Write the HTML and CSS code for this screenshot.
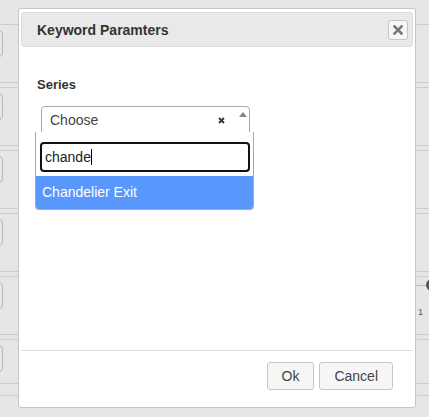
FILE: index.html
```html
<!DOCTYPE html>
<html>
<head>
<meta charset="utf-8">
<title>Keyword Paramters</title>
<link rel="stylesheet" href="styles.css">
</head>
<body>
<div class="page">
  <div class="row"><span class="stub"></span></div>
  <div class="row"><span class="stub"></span></div>
  <div class="row"><span class="stub"></span></div>
  <div class="row"><span class="stub"></span></div>
  <div class="row">
    <span class="stub"></span>
    <div class="knob-wrap">
      <div class="track"><span class="track-line"></span><span class="knob"></span></div>
      <div class="num">1</div>
    </div>
  </div>
  <div class="row row-last"><span class="stub"></span></div>
  <div class="rule"></div>
</div>

<div class="dialog">
  <div class="titlebar">
    <span class="title">Keyword Paramters</span>
    <button class="close" type="button" aria-label="Close">
      <svg width="10" height="10" viewBox="0 0 10 10"><path d="M1.5 1.5 L8.5 8.5 M8.5 1.5 L1.5 8.5" stroke="#777" stroke-width="2.6" stroke-linecap="square" fill="none"/></svg>
    </button>
  </div>
  <div class="content">
    <div class="label">Series</div>
    <div class="select">
      <span class="choice">Choose</span>
      <span class="clear"><svg width="7" height="7" viewBox="0 0 7 7"><path d="M1 1 L6 6 M6 1 L1 6" stroke="#333" stroke-width="1.8" fill="none"/></svg></span>
      <span class="arrow"></span>
      <div class="drop">
        <div class="search"><span class="typed">chande</span><span class="caret"></span></div>
        <div class="option">Chandelier Exit</div>
      </div>
    </div>
  </div>
  <div class="pane">
    <button class="btn" type="button">Ok</button>
    <button class="btn" type="button">Cancel</button>
  </div>
</div>
</body>
</html>
```

FILE: styles.css
```css
html, body {
  margin: 0;
  padding: 0;
}
body {
  width: 429px;
  height: 417px;
  overflow: hidden;
  background: #e6e6e6;
  font-family: "Liberation Sans", Arial, sans-serif;
  position: relative;
}

/* background page */
.page {
  padding-top: 24px;
}
.row {
  display: flex;
  align-items: flex-start;
  height: 57px;
  border-top: 1px solid #cccccc;
  border-bottom: 1px solid #cccccc;
  margin-bottom: 4px;
}
.row-last {
  height: 43px;
  margin-bottom: 11px;
}
.rule {
  border-top: 1px solid #cccccc;
}
.stub {
  display: block;
  width: 40px;
  height: 27px;
  margin-left: -37px;
  margin-top: 5px;
  box-sizing: border-box;
  border: 1px solid #b8b8b8;
  border-radius: 4px;
}
.knob-wrap {
  margin-left: auto;
  width: 13px;
  display: flex;
  flex-direction: column;
  padding-top: 2px;
}
.track {
  display: flex;
  align-items: center;
  height: 12px;
}
.track-line {
  width: 10px;
  border-top: 1px solid #bbbbbb;
  flex-shrink: 0;
}
.knob {
  width: 12px;
  height: 12px;
  border-radius: 50%;
  background: #555555;
  flex-shrink: 0;
}
.num {
  font-size: 9px;
  color: #3c5a8a;
  margin-top: 16px;
  margin-left: 2px;
}

/* dialog */
.dialog {
  position: absolute;
  left: 18px;
  top: 8px;
  width: 398px;
  height: 400px;
  box-sizing: border-box;
  background: #ffffff;
  border: 1px solid #c5c5c5;
  border-radius: 3px;
  padding: 3px 2px 2px 2px;
  display: flex;
  flex-direction: column;
}
.titlebar {
  height: 33px;
  border: 1px solid #dddddd;
  border-radius: 3px;
  background: #e9e9e9;
  display: flex;
  align-items: center;
  padding-left: 15px;
  padding-right: 4px;
}
.title {
  flex: 1;
  font-size: 14px;
  font-weight: bold;
  color: #333333;
}
.close {
  width: 20px;
  height: 20px;
  padding: 0;
  margin: 0;
  box-sizing: border-box;
  border: 1px solid #c5c5c5;
  border-radius: 3px;
  background: #f6f6f6;
  display: flex;
  align-items: center;
  justify-content: center;
}
.content {
  flex: 1;
  padding: 30px 16px 0 16px;
}
.label {
  font-size: 13px;
  line-height: 15px;
  font-weight: bold;
  color: #333333;
}
.select {
  position: relative;
  margin-top: 14px;
  margin-left: 4px;
  width: 209px;
  height: 27px;
  box-sizing: border-box;
  border: 1px solid #aaaaaa;
  border-radius: 4px 4px 0 0;
  background: #ffffff;
  display: flex;
  align-items: flex-start;
  padding-left: 8px;
}
.choice {
  flex: 1;
  font-size: 14px;
  line-height: 24px;
  padding-top: 1px;
  color: #444444;
}
.clear {
  display: flex;
  margin-top: 10px;
  margin-right: 14px;
}
.arrow {
  width: 0;
  height: 0;
  border-left: 4px solid transparent;
  border-right: 4px solid transparent;
  border-bottom: 5px solid #888888;
  margin-top: 5px;
  margin-right: 2px;
}
.drop {
  position: absolute;
  top: 25px;
  left: -7px;
  width: 219px;
  box-sizing: border-box;
  border: 1px solid #aaaaaa;
  border-top: none;
  border-radius: 0 0 4px 4px;
  background: #ffffff;
  padding: 10px 3px 0 4px;
  overflow: hidden;
}
.search {
  height: 30px;
  box-sizing: border-box;
  border: 2px solid #111111;
  border-radius: 4px;
  display: flex;
  align-items: center;
  padding-left: 3px;
}
.typed {
  font-size: 14px;
  line-height: 26px;
  color: #222222;
}
.caret {
  width: 1px;
  height: 16px;
  background: #000000;
}
.option {
  margin: 4px -3px 0 -4px;
  height: 33px;
  line-height: 33px;
  padding-left: 6px;
  font-size: 14px;
  color: #ffffff;
  background: #5897fb;
}
.pane {
  border-top: 1px solid #dddddd;
  padding: 11px 20px 15px 20px;
  display: flex;
  justify-content: flex-end;
  gap: 5px;
}
.btn {
  height: 28px;
  box-sizing: border-box;
  padding: 0 14px;
  margin: 0;
  font-family: "Liberation Sans", Arial, sans-serif;
  font-size: 14px;
  color: #454545;
  background: #f6f6f6;
  border: 1px solid #c5c5c5;
  border-radius: 3px;
}
```
